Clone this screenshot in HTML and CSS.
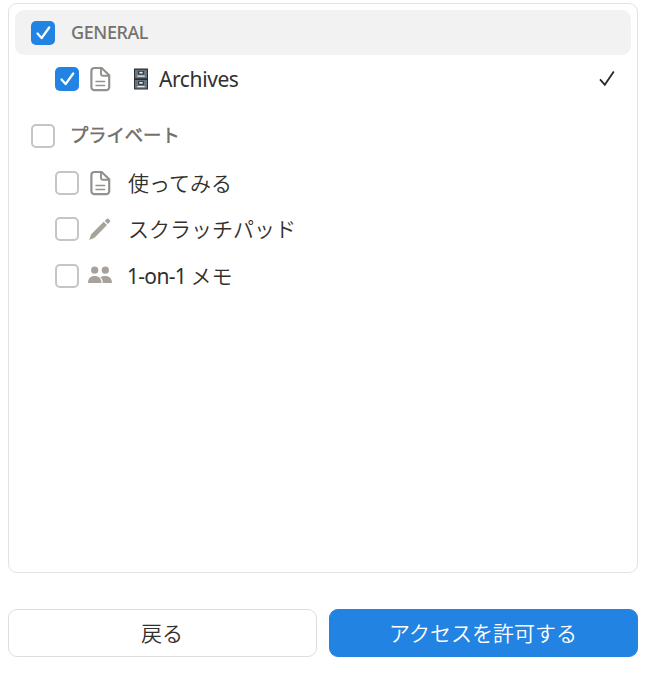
FILE: index.html
```html
<!DOCTYPE html>
<html lang="ja">
<head>
<meta charset="utf-8">
<title>ページを選択</title>
<link rel="stylesheet" href="styles.css">
</head>
<body>
<svg class="defs" width="0" height="0">
  <symbol id="tick" viewBox="0 0 24 24"><path d="M6.5 12.5l4.1 4.6L18.2 6.5" fill="none" stroke="currentColor" stroke-width="2.3" stroke-linecap="round" stroke-linejoin="round"/></symbol>
  <symbol id="page" viewBox="0 0 24 26"><g fill="none" stroke="#91918e" stroke-linejoin="round" stroke-linecap="round"><path d="M6.4 2h7.2l7.6 7.3v11.9a3 3 0 0 1-3 3H6.4a3 3 0 0 1-3-3V5a3 3 0 0 1 3-3z" stroke-width="2.2"/><path d="M13 2.5v5.3a2 2 0 0 0 2 2h5.8" stroke-width="1.9"/><path d="M8 15.5h8.6M8 19.5h8.6" stroke-width="1.4"/></g></symbol>
</svg>
<main class="dialog">
  <section class="panel">
    <div class="row group selected">
      <span class="box checked"><svg><use href="#tick"/></svg></span>
      <span class="label general">GENERAL</span>
    </div>
    <div class="row item archive-row">
      <span class="box checked"><svg><use href="#tick"/></svg></span>
      <svg class="icon"><use href="#page"/></svg>
      <svg class="cabinet" viewBox="0 0 14 22"><path fill="#292f33" d="M0 .5h14v21H0z"/><path fill="#66757f" d="M1 1.7h12v8.6H1zM1 12h12v8.6H1z"/><path fill="#292f33" d="M4.2 3h5.6v3.6H4.2zM4.2 13.2h5.6v3.6H4.2z"/><path fill="#e1e8ed" d="M5.3 3.8h3.4v1.8H5.3zM5.3 14h3.4v1.8H5.3zM3.3 7.6h7.4v1.2H3.3zM3.3 18h7.4v1.2H3.3z"/></svg>
      <span class="label archives">Archives</span>
      <svg class="current" viewBox="0 0 18 18"><path d="M2 9.3l4.8 5.5L15.8 1.5" fill="none" stroke="#282724" stroke-width="1.8"/></svg>
    </div>
    <div class="row group private">
      <span class="box"></span>
      <span class="label">プライベート</span>
    </div>
    <div class="row item">
      <span class="box"></span>
      <svg class="icon"><use href="#page"/></svg>
      <span class="label">使ってみる</span>
    </div>
    <div class="row item tight">
      <span class="box"></span>
      <svg class="icon" viewBox="0 0 24 26"><path fill="#a7a39a" d="M1.2 23.9l2-5.6L15.7 5.8l3.3 3.3L6.6 21.7zM16.7 4.9l2.1-2.1q.8-.8 1.6 0l1.5 1.5q.8.8 0 1.6L19.9 8z"/></svg>
      <span class="label">スクラッチパッド</span>
    </div>
    <div class="row item">
      <span class="box"></span>
      <svg class="icon" viewBox="0 0 24 26"><g fill="#a7a39a"><circle cx="6.7" cy="7.2" r="3.6"/><circle cx="17.3" cy="7.2" r="3.6"/><path d="M0 20c0-4.4 2.6-7 6.7-7s6.8 2.6 6.8 7zM12.4 14c1.4-.7 3-1 4.8-1 4.1 0 6.8 2.6 6.8 7h-9.2c0-2.3-.8-4.4-2.4-6z"/></g></svg>
      <span class="label memo"><span class="latin">1-on-1</span> メモ</span>
    </div>
  </section>
  <div class="actions">
    <button class="button">戻る</button>
    <button class="button primary">アクセスを許可する</button>
  </div>
</main>
</body>
</html>
```
FILE: styles.css
```css
* { box-sizing: border-box; }
body {
  margin: 0;
  background: #fff;
  color: #32302c;
  font: 350 21px/30px "Noto Sans", "Noto Sans CJK JP DemiLight", "Noto Sans CJK JP", sans-serif;
}
.defs { display: block; }
.dialog { padding: 3px 20px 16px 8px; }
.panel {
  height: 570px;
  padding: 6px;
  border: 1px solid #e2e2e1;
  border-radius: 9px;
}
.row {
  display: flex;
  align-items: center;
  height: 47px;
}
.group { padding-left: 16px; font-size: 18px; font-weight: 700; color: #74726e; }
.selected { height: 45px; border-radius: 9px; background: #f2f2f2; }
.item { padding: 0 15px 0 40px; }
.archive-row { height: 48px; }
.private { height: 56px; padding-top: 10px; }
.private .label { margin-top: -2px; font-size: 18.3px; margin-left: 15px; }
.tight { height: 46px; }
.tight .label { margin-top: -1px; }
.box {
  flex: none;
  width: 24px;
  height: 24px;
  border: 2px solid #c6c5c3;
  border-radius: 5px;
}
.checked { border: 0; background: #2383e2; color: #fff; }
.checked svg { display: block; width: 24px; height: 24px; }
.icon { flex: none; width: 24px; height: 26px; margin-left: 9px; }
.label { margin-left: 16px; white-space: nowrap; }
.general { margin-top: -2px; font-weight: 500; letter-spacing: -0.4px; }
.cabinet { width: 14px; height: 22px; margin-left: 22px; }
.archives { margin-left: 11px; font-weight: 400; letter-spacing: -0.4px; }
.memo { margin-left: 15px; word-spacing: -1px; }
.latin { font-weight: 400; letter-spacing: -0.7px; }
.current { width: 18px; height: 18px; margin-left: auto; }
.actions { display: grid; grid-template-columns: 1fr 1fr; gap: 12px; margin-top: 36px; }
.button {
  height: 48px;
  padding: 0 1px 1px 0;
  border: 1px solid #dededc;
  border-radius: 9px;
  background: #fff;
  color: inherit;
  font: inherit;
}
.primary { border-color: #2383e2; background: #2383e2; color: #fff; }
```
